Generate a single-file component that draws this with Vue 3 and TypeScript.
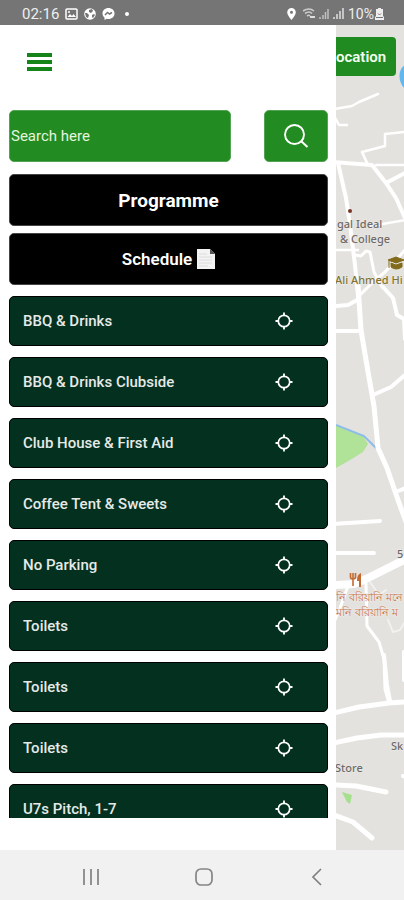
<script setup lang="ts">
import { ref } from 'vue'

const query = ref('')

const places: string[] = [
  'BBQ & Drinks',
  'BBQ & Drinks Clubside',
  'Club House & First Aid',
  'Coffee Tent & Sweets',
  'No Parking',
  'Toilets',
  'Toilets',
  'Toilets',
  'U7s Pitch, 1-7',
]
</script>

<template>
  <div class="screen">
    <header class="status">
      <div class="status-side">
        <span class="clock">02:16</span>
        <svg width="13" height="12" viewBox="0 0 13 12" aria-hidden="true">
          <rect x="1" y="1" width="11" height="10" rx="1" fill="none" stroke="#fff" stroke-width="1.5" />
          <path d="M2.5 9l2.5-3 2 2 1.500-2 2.500 3z" fill="#fff" />
          <circle cx="4" cy="4" r="1" fill="#fff" />
        </svg>
        <svg width="12" height="12" viewBox="0 0 12 12" aria-hidden="true">
          <circle cx="6" cy="6" r="5.800" fill="#fff" />
          <path d="M5 2l3-1 1 2-2 2-2-1zM1 5l2 0 2 2-1 3-2-1zM8 7l2-1 1 1-2 3-1-1z" fill="#757575" />
        </svg>
        <svg width="13" height="12" viewBox="0 0 13 12" aria-hidden="true">
          <path d="M6.500 0C2.900 0 .5 2.400.5 5.500c0 1.700.8 3.100 2 4.100V12l2.200-1.200c.6.100 1.200.2 1.800.2 3.600 0 6-2.400 6-5.500S10.100 0 6.500 0z" fill="#fff" />
          <path d="M3 7l2.500-2.500 2 1.500L10 4.500" fill="none" stroke="#757575" stroke-width="1.500" />
        </svg>
        <span class="dot"></span>
      </div>
      <div class="status-side status-right">
        <svg width="9" height="12" viewBox="0 0 9 12" aria-hidden="true">
          <path d="M4.500 0A4.300 4.300 0 0 0 .2 4.300C.2 7.500 4.500 12 4.500 12s4.300-4.500 4.300-7.700A4.300 4.300 0 0 0 4.500 0zm0 2.800a1.500 1.500 0 1 1 0 3 1.500 1.500 0 0 1 0-3z" fill="#fff" fill-rule="evenodd" />
        </svg>
        <svg class="wifi" width="12" height="11" viewBox="0 0 12 11" aria-hidden="true">
          <path d="M0 3q6-4 11 0M2 5.500q4-3 7 0M4 8q2-1.500 3 0" fill="none" stroke="#ccc" stroke-width="1.600" />
          <path d="M7 9h5" stroke="#ddd" stroke-width="2" />
        </svg>
        <svg width="10" height="11" viewBox="0 0 10 11" aria-hidden="true">
          <path d="M1 9v2M4 7v4M6.500 4v7M9 1v10" stroke="#c0c0c0" stroke-width="1.500" />
        </svg>
        <svg width="11" height="11" viewBox="0 0 11 11" aria-hidden="true">
          <path d="M1 9v2M4 6v5M7 3v8M10 0v11" stroke="#c9c9c9" stroke-width="1.900" />
        </svg>
        <span class="battery">10%</span>
        <svg width="9" height="12" viewBox="0 0 9 12" aria-hidden="true">
          <path d="M3 0h3v1h2v7l1 1v3H0V9l1-1V1h2z" fill="#eee" />
          <path d="M3 5.500L4.500 7 6 5.500M1 9.500h7" fill="none" stroke="#757575" />
        </svg>
      </div>
    </header>

    <div class="content">
      <aside class="drawer">
        <div class="drawer-head">
          <button class="menu" type="button" aria-label="Menu">
            <span></span><span></span><span></span>
          </button>
        </div>
        <form class="search" @submit.prevent>
          <input v-model="query" class="field" type="text" placeholder="Search here" aria-label="Search here" />
          <button class="search-button" type="submit" aria-label="Search">
            <svg width="26" height="26" viewBox="0 0 26 26" aria-hidden="true">
              <circle cx="11.500" cy="11.500" r="9.500" fill="none" stroke="#fff" stroke-width="1.900" />
              <path d="M18 18l6.500 6" stroke="#fff" stroke-width="2" />
            </svg>
          </button>
        </form>
        <div class="actions">
          <button class="action programme" type="button">Programme</button>
          <button class="action schedule" type="button">
            Schedule
            <svg width="19" height="20" viewBox="0 0 19 20" aria-hidden="true">
              <path d="M1 0h13l5 5v15H1z" fill="#f3f3f3" />
              <path d="M14 0v5h5z" fill="#555" />
              <path d="M3 5h8M3 8h13M3 11h13M3 14h13M3 17h9" stroke="#dcdcdc" stroke-width="1" />
            </svg>
          </button>
        </div>
        <ul class="places">
          <li v-for="(place, index) in places" :key="index">
            <button class="place" type="button">
              <span>{{ place }}</span>
              <svg width="18" height="18" viewBox="0 0 18 18" aria-hidden="true">
                <circle cx="9" cy="9" r="5.700" fill="none" stroke="#fff" stroke-width="1.700" />
                <path d="M9 .5v3.500M9 14v3.500M.5 9H4M14 9h3.500" stroke="#fff" stroke-width="1.800" />
              </svg>
            </button>
          </li>
        </ul>
      </aside>

      <main class="map">
        <svg class="map-art" viewBox="336 25 68 825" preserveAspectRatio="xMinYMin slice" role="img" aria-label="Map">
          <rect x="336" y="25" width="400" height="1200" fill="#e3e2df" />
          <path d="M406 65C398 67 397 82 405 89z" fill="#62b8ee" />
          <path d="M336 425l27 11 5 8-5 8-13 8-14 8z" fill="#b0e297" />
          <path d="M336 425l28 11 14 14" fill="none" stroke="#8cbdea" stroke-width="2" />
          <path d="M342 792l10 3-2 9-3-2z" fill="#a5e08c" />
          <g fill="none" stroke="#fff" stroke-linejoin="round" stroke-linecap="round">
            <path stroke-width="2.500" d="M334 109l18-3 7-4 19-8M334 116l5 9 8 0M404 132l-19 2v12l-23 6 6 13M376 165h30M371 226l35-6M334 250h24" />
            <path stroke-width="4" d="M334 162l38 3 14 18 10 15 9 20M386 183l19-10" />
            <path stroke-width="4" d="M338 163l8 35 4 27 5 40 4 40" />
            <path stroke-width="3" d="M355 255l6 1 5-5 4 1 4 20 8 15M359 296l14-14 12-10 20-22" />
            <path stroke-width="4" d="M336 306l12-1 11-6M335 331h25M383 287l10 11 4 17 7 4 1 20" />
            <path stroke-width="5" d="M358 285l3 45 6 36 7 40 4 42 9 20 11 32 8 22" />
            <path stroke-width="4" d="M373 395l18-8 14-12M398 491l8-3M334 524l46-3M334 553h40" />
            <path stroke-width="8" d="M334 585l20-1 12-5 24-12 18-9" />
            <path stroke-width="3" d="M348 586l-8 22-5 12M366 584l1 42 12 16 5 17 1 30 4 14" />
            <path stroke-width="2" stroke="#f2f1ef" d="M370 582l9 13 7-5M388 620l5 12 7-2 6-10" />
            <path stroke-width="5" d="M334 713l25-6 30-4 17-1M334 743l23-5 24-3h25M334 785l22 1 30 6M334 815l19 7 19 16" />
            <path stroke-width="4" d="M403 776l3 1M384 655l3 30 3 16M404 652v28" />
          </g>
          <g class="labels">
            <circle cx="350" cy="211" r="2" fill="#7a3425" />
            <text x="337" y="228">gal Ideal</text>
            <text x="340" y="243">&amp; College</text>
            <text class="gold" x="335" y="284">Ali Ahmed Hi</text>
            <path d="M388 260l8-3 8 3-8 3zM391 263l5 2 6-2v4q-6 4-11 0zM389 261v7" fill="#826b1b" stroke="#826b1b" />
            <path d="M350.500 573v4q0 2 2.500 2t2.500-2v-4M353 573v13" fill="none" stroke="#c46a30" stroke-width="1.600" />
            <path d="M361 573v14h-2v-6h-2q0-7 4-8z" fill="#c46a30" />
            <text x="397" y="558">5</text>
            <text class="food" x="336" y="601">নি বরিয়ানি মনে</text>
            <text class="food" x="336" y="616">মনি বরিয়ানি ম</text>
            <text x="391" y="750">Sk</text>
            <text x="335" y="772">Store</text>
          </g>
        </svg>
        <button class="location" type="button" aria-label="Location">ocation</button>
      </main>
    </div>

    <nav class="system" aria-label="System">
      <button type="button" aria-label="Recent apps">
        <svg width="18" height="18" viewBox="0 0 18 18"><path d="M2 1v16M9 1v16M16 1v16" stroke="#929292" stroke-width="2" /></svg>
      </button>
      <button type="button" aria-label="Home">
        <svg width="18" height="18" viewBox="0 0 18 18"><rect x="1" y="1" width="16" height="16" rx="5" fill="none" stroke="#858585" stroke-width="1.700" /></svg>
      </button>
      <button type="button" aria-label="Back">
        <svg width="18" height="18" viewBox="0 0 18 18"><path d="M13 1L5 9l8 8" fill="none" stroke="#808080" stroke-width="1.700" /></svg>
      </button>
    </nav>
  </div>
</template>

<style>
body {
  margin: 0;
}
</style>

<style scoped>
.screen {
  display: flex;
  flex-direction: column;
  height: 100vh;
  overflow: hidden;
  background: #fff;
  font-family: Roboto, "Noto Sans", sans-serif;
}
button,
input {
  margin: 0;
  padding: 0;
  border: 0;
  font-family: inherit;
}
svg {
  display: block;
  flex: none;
}
.status {
  display: flex;
  flex: none;
  align-items: center;
  justify-content: space-between;
  height: 25px;
  padding: 2px 20px 0 22px;
  box-sizing: border-box;
  background: #757575;
  color: #eee;
  font-size: 14px;
}
.status-side {
  display: flex;
  align-items: center;
  gap: 6px;
}
.status-right {
  gap: 4px;
}
.clock {
  font-size: 15px;
}
.wifi {
  margin-left: 3px;
}
.dot {
  width: 4px;
  height: 4px;
  margin-left: 4px;
  border-radius: 50%;
  background: #fff;
}
.battery {
  margin-right: -3px;
}
.content {
  display: grid;
  grid-template-columns: minmax(0, 1fr) 68px;
  flex: 1;
  min-height: 0;
}
.drawer {
  display: flex;
  flex-direction: column;
  min-height: 0;
  padding: 0 8px 32px 9px;
}
.drawer-head {
  display: flex;
  flex: none;
  align-items: center;
  height: 74px;
  margin-bottom: 11px;
  padding-left: 18px;
}
.menu {
  display: grid;
  gap: 3px;
  width: 25px;
  background: none;
}
.menu span {
  height: 4px;
  background: #158519;
}
.search {
  display: flex;
  flex: none;
  gap: 33px;
  margin-bottom: 12px;
}
.field,
.search-button {
  height: 52px;
  box-sizing: border-box;
  border: 1px solid #54a354;
  border-radius: 5px;
  background: #228b22;
}
.field {
  flex: 1;
  min-width: 0;
  padding-left: 1px;
  color: #fff;
  font-size: 15px;
}
.field::placeholder {
  color: #e5f5df;
  opacity: 1;
}
.search-button {
  display: grid;
  place-items: center;
  width: 64px;
}
.actions {
  display: grid;
  flex: none;
  gap: 7px;
  margin-bottom: 11px;
}
.action {
  display: flex;
  align-items: center;
  justify-content: center;
  gap: 4px;
  height: 52px;
  border: 1px solid #444;
  border-radius: 5px;
  background: #000;
  color: #fff;
  font-weight: 700;
}
.programme {
  font-size: 19px;
}
.schedule {
  font-size: 17px;
  font-weight: 600;
}
.places {
  display: flex;
  flex: 1;
  flex-direction: column;
  gap: 11px;
  min-height: 0;
  margin: 0;
  padding: 0;
  overflow: hidden;
  list-style: none;
}
.place {
  display: flex;
  align-items: center;
  justify-content: space-between;
  width: 100%;
  height: 50px;
  padding: 0 34px 0 13px;
  box-sizing: border-box;
  border: 1px solid #000;
  border-radius: 5px;
  background: #03301f;
  color: #e6eae7;
  font-size: 15px;
  font-weight: 500;
}
.map {
  position: relative;
  overflow: hidden;
  background: #e3e2df;
}
.map-art {
  width: 100%;
  height: 100%;
}
.labels text {
  fill: #6e6966;
  font-family: "Noto Sans", sans-serif;
  font-size: 11px;
  font-weight: 500;
  paint-order: stroke;
  stroke: #eeedeb;
  stroke-width: 1px;
}
.labels .gold {
  fill: #827330;
}
.labels .food {
  fill: #c9764c;
}
.location {
  position: absolute;
  top: 12px;
  left: 0;
  width: 60px;
  height: 39px;
  border-radius: 0 4px 4px 0;
  background: #1f8b20;
  color: #f2fff0;
  font-size: 15px;
  font-weight: 600;
  text-align: left;
}
.system {
  display: flex;
  flex: none;
  align-items: center;
  justify-content: center;
  gap: 95px;
  height: 50px;
  padding: 3px 0 0 4px;
  box-sizing: border-box;
  background: #f1f1f1;
}
.system button {
  width: 18px;
  background: none;
}
</style>
